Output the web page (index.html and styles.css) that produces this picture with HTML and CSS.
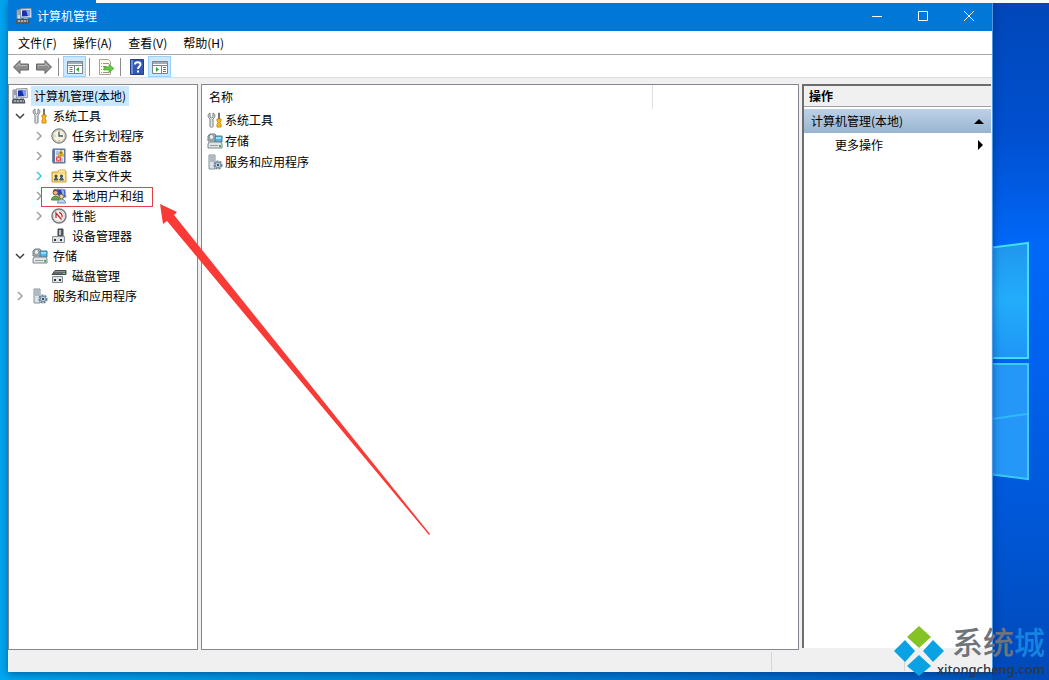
FILE: index.html
```html
<!DOCTYPE html>
<html lang="zh-CN">
<head>
    <meta charset="UTF-8">
    <title>计算机管理</title>
    <link rel="stylesheet" href="styles.css">
</head>
<body>
    <!-- icon set, 16x16 each -->
    <svg class="sprite" aria-hidden="true">
        <symbol id="computer" viewBox="0 0 16 16">
            <path d="M1 2h4v9H1z" fill="#d5d9dd" stroke="#7d858c"/>
            <path d="M2 4h2M2 6h2" stroke="#60686f"/>
            <path d="M4 1l11-.5.5 9L5 10z" fill="#e4e8ec" stroke="#8b949c"/>
            <path d="M6 2.500l8-.5v6L6 8.500z" fill="#1c2fb4"/>
            <path d="M10 2.200l4-.2v6l-2 .2z" fill="#7ba4f0"/>
            <path d="M8 10h4v2H8z" fill="#a5acb2"/>
            <path d="M1 11.500h11l1 3.500H0z" fill="#68717a" stroke="#484f56"/>
            <path d="M2 13h10" stroke="#dce0e3" stroke-dasharray="2 1"/>
        </symbol>
        <symbol id="tools" viewBox="0 0 16 16">
            <path d="M3 1v4l1.500 1L6 5V1c2.500 1 2.500 4 0 6v7.500c0 1-3 1-3 0V7C.5 5 .5 2 3 1z" fill="#e3e5e7" stroke="#777c80"/>
            <path d="M11.500 1h1v6h-1z" fill="#8e8e8e" stroke="#777"/>
            <path d="M10 7h4v2l-1 1v1l1 1v3h-4v-3l1-1v-1l-1-1z" fill="#fbbc20" stroke="#d28a0b"/>
        </symbol>
        <symbol id="clock" viewBox="0 0 16 16">
            <circle cx="8" cy="8" r="7.200" fill="#b8bbbd" stroke="#74787b"/>
            <circle cx="8" cy="8" r="5.700" fill="#f9f5dc" stroke="#d9d3b5"/>
            <path d="M8 3.500V8h4" fill="none" stroke="#3e5872" stroke-width="1.300"/>
            <path d="M8 12v1M3.500 8h1" stroke="#888"/>
        </symbol>
        <symbol id="events" viewBox="0 0 16 16">
            <path d="M2 1h12v14H2z" fill="#7c8fbf" stroke="#56688f"/>
            <path d="M4 2h9v12H4z" fill="#e6ebf5"/>
            <path d="M1 3h3M1 5h3M1 7h3M1 9h3M1 11h3M1 13h3" stroke="#4a5f8e"/>
            <path d="M5 4h3M5 6h3M9 11h3M9 13h3" stroke="#7f93bd"/>
            <path d="M10 2l3 6H7z" fill="#ffda2d" stroke="#c6a01b"/>
            <path d="M10 4v2M10 6.500v1" stroke="#333"/>
            <path d="M5 8.500h5v5H5z" fill="#df4545"/>
            <path d="M6 9.500l3 3m0-3l-3 3" stroke="#fff"/>
        </symbol>
        <symbol id="shared" viewBox="0 0 16 16">
            <path d="M1 4h6l1-2h6l1 2v10H1z" fill="#f7d878" stroke="#c99e37"/>
            <path d="M8 3h6" stroke="#fff4c6"/>
            <path d="M2 6h12v7H2z" fill="#ffe9a0"/>
            <circle cx="5" cy="8" r="1.600" fill="#5b4a2f"/>
            <circle cx="10.500" cy="8" r="1.600" fill="#395875"/>
            <path d="M3 12l2-3 2 3zm5.500 0l2-3 2 3z" fill="#477290" stroke="#355469"/>
        </symbol>
        <symbol id="users" viewBox="0 0 16 16">
            <path d="M6 1l8 .5 1 8L7 8z" fill="#283ebd" stroke="#9aa7b4"/>
            <path d="M10 2l3 .3.600 5-2-.3z" fill="#8eb2f2"/>
            <circle cx="4.500" cy="4.500" r="2.500" fill="#e9b77e" stroke="#7b562c"/>
            <path d="M2 4c0-4 5-4 5 0L4.500 3z" fill="#73502c"/>
            <path d="M0.500 12c0-5 8-5 8 0z" fill="#6ba644" stroke="#4c7e2d"/>
            <circle cx="10.500" cy="8.500" r="2.300" fill="#e6ce98" stroke="#88673c"/>
            <path d="M6.500 15c0-5 8-5 8 0z" fill="#bed5ef" stroke="#6c8fb5"/>
        </symbol>
        <symbol id="performance" viewBox="0 0 16 16">
            <circle cx="8" cy="8" r="7" fill="#fff" stroke="#777b7e" stroke-width="1.500"/>
            <circle cx="8" cy="8" r="5.400" fill="#fff" stroke="#c9cccd"/>
            <path d="M5 10V5l5.500 6.500M8 4.500c2 0 3.500 2 3 5" fill="none" stroke="#cc2525" stroke-width="1.300"/>
        </symbol>
        <symbol id="device" viewBox="0 0 16 16">
            <path d="M7 1h5v9H7z" fill="#565d62" stroke="#3e4448"/>
            <path d="M8 2h2v5H8z" fill="#b8c0c4"/>
            <path d="M1.500 8.500h12v6h-12z" fill="#e0e3e5" stroke="#8c9296"/>
            <path d="M4 11v2m6-2v2" stroke="#333" stroke-width="2"/>
        </symbol>
        <symbol id="storage" viewBox="0 0 16 16">
            <path d="M1 3l2-2h5l1 2v5H1z" fill="#b5bcc0" stroke="#777f84"/>
            <circle cx="4.500" cy="4" r="2.500" fill="#e8ecee" stroke="#818a90"/>
            <path d="M8 3h7v6H8z" fill="#4cb5e2" stroke="#477f9a"/>
            <path d="M9 4h5v2H9z" fill="#94def6"/>
            <path d="M2 9h12l1 2v4H1v-4z" fill="#e2e5e7" stroke="#7c8589"/>
            <path d="M3 12.500h8" stroke="#979fa3"/>
            <path d="M12 12h2v2h-2z" fill="#43b543"/>
        </symbol>
        <symbol id="disk" viewBox="0 0 16 16">
            <path d="M4 2.500h11v4H1z" fill="#62696d" stroke="#474d50"/>
            <path d="M4 3.500h10" stroke="#8d9598"/>
            <path d="M12 5h2v1h-2z" fill="#74d575"/>
            <path d="M1.500 8.500h10v6h-10z" fill="#e1e4e6" stroke="#858b8f"/>
            <path d="M4 11v2m5-2v2" stroke="#333" stroke-width="2"/>
        </symbol>
        <symbol id="services" viewBox="0 0 16 16">
            <path d="M2 1h6v14H2z" fill="#dce2e6" stroke="#84929b"/>
            <path d="M3 3h4M3 5h4M3 7h4" stroke="#8293a0"/>
            <circle cx="11" cy="11" r="3.600" fill="#b7c9d7" stroke="#6d8599" stroke-width="2" stroke-dasharray="2 1"/>
            <circle cx="11" cy="11" r="2.800" fill="#cbd8e1" stroke="#7890a4"/>
            <circle cx="11" cy="11" r="1.200" fill="#38536b"/>
        </symbol>
        <symbol id="arrow" viewBox="0 0 16 16">
            <path d="M0.500 8L7 1.500V5h8.500v6H7v3.500z" fill="#8d8d8d" stroke="#656565"/>
            <path d="M3 8l3.500-3.500V6.500H14" fill="none" stroke="#b9b9b9"/>
        </symbol>
        <symbol id="pane-left" viewBox="0 0 16 16">
            <path d="M.5 2.500h15v12H.5z" fill="#fff" stroke="#7b838b"/>
            <path d="M1 3h14v2H1z" fill="#a1acb7"/>
            <path d="M1 6.500h14M7.500 7v7" stroke="#7b838b"/>
            <path d="M2.500 8.500h3m-3 2h3m-3 2h3" stroke="#687681"/>
            <path d="M12 8v5l-3-2.500z" fill="#31a431"/>
        </symbol>
        <symbol id="pane-right" viewBox="0 0 16 16">
            <path d="M.5 2.500h15v12H.5z" fill="#fff" stroke="#7b838b"/>
            <path d="M1 3h14v2H1z" fill="#a1acb7"/>
            <path d="M1 6.500h14M9.500 7v7" stroke="#7b838b"/>
            <path d="M11 8.500h3m-3 2h3m-3 2h3" stroke="#687681"/>
            <path d="M4 8v5l3-2.500z" fill="#31a431"/>
        </symbol>
        <symbol id="export" viewBox="0 0 16 16">
            <path d="M1.500.5h9l2 2v13h-11z" fill="#fffdf0" stroke="#a8a38f"/>
            <path d="M3 4.500h1m1 0h6M3 7.500h1m1 0h4M3 10.500h1m1 0h4M3 13.500h1m1 0h6" stroke="#99958a"/>
            <path d="M6 8h5V5.500l5 4-5 4V11H6z" fill="#5fcc45" stroke="#389e29" stroke-width=".6"/>
        </symbol>
        <symbol id="help" viewBox="0 0 16 16">
            <path d="M1.500.5h13v15h-13z" fill="#3457b5" stroke="#233e8a"/>
            <path d="M2 1h2v14H2z" fill="#6d8bd6"/>
            <path d="M6 5.500c0-3 5.500-3 5.500 0 0 2-2.500 2-2.500 4.500M9 11.500v2" fill="none" stroke="#fff" stroke-width="2"/>
        </symbol>
        <symbol id="chevron" viewBox="0 0 16 16">
            <path d="M6 4l4 4-4 4" fill="none" stroke="currentColor" stroke-width="1.500"/>
        </symbol>
    </svg>

    <div class="desktop">
        <svg class="wallpaper-logo" viewBox="0 0 38 240" aria-hidden="true">
            <defs>
                <linearGradient id="glass" x1="0" y1="0" x2="0" y2="1">
                    <stop offset="0" stop-color="#2096ee"/>
                    <stop offset=".5" stop-color="#22adfb"/>
                    <stop offset="1" stop-color="#1e96f6"/>
                </linearGradient>
            </defs>
            <path d="M-4 7l40-5v115H-4z" fill="url(#glass)" stroke="#3fe0fa" stroke-width="2"/>
            <path d="M-4 123h40v115l-40-5z" fill="#2598f7" stroke="#38cdf8" stroke-width="2"/>
            <path d="M0 178l35-5" stroke="#30b9fb" stroke-width="2"/>
        </svg>

        <div class="window">
            <header class="titlebar">
                <svg class="icon"><use href="#computer"/></svg>
                <span class="title">计算机管理</span>
                <button class="caption" aria-label="最小化"><svg viewBox="0 0 12 12"><path d="M1 6.500h10"/></svg></button>
                <button class="caption" aria-label="最大化"><svg viewBox="0 0 12 12"><path d="M1.500 1.500h9v9h-9z"/></svg></button>
                <button class="caption" aria-label="关闭"><svg viewBox="0 0 12 12"><path d="M1 1l10 10M11 1L1 11"/></svg></button>
            </header>

            <nav class="menubar">
                <button>文件(F)</button>
                <button>操作(A)</button>
                <button>查看(V)</button>
                <button>帮助(H)</button>
            </nav>

            <div class="toolbar">
                <button aria-label="后退"><svg class="icon"><use href="#arrow"/></svg></button>
                <button aria-label="前进"><svg class="icon flip"><use href="#arrow"/></svg></button>
                <span class="sep"></span>
                <button class="on" aria-label="显示/隐藏控制台树"><svg class="icon"><use href="#pane-left"/></svg></button>
                <span class="sep"></span>
                <button aria-label="导出列表"><svg class="icon"><use href="#export"/></svg></button>
                <span class="sep"></span>
                <button aria-label="帮助"><svg class="icon"><use href="#help"/></svg></button>
                <button class="on" aria-label="显示/隐藏操作窗格"><svg class="icon"><use href="#pane-right"/></svg></button>
            </div>

            <main class="panes">
                <section class="tree">
                    <div class="node root">
                        <svg class="icon"><use href="#computer"/></svg>
                        <span class="selected">计算机管理(本地)</span>
                    </div>
                    <ul>
                        <li>
                            <div class="node">
                                <button class="toggle open" aria-label="折叠"><svg class="icon"><use href="#chevron"/></svg></button>
                                <svg class="icon"><use href="#tools"/></svg><span>系统工具</span>
                            </div>
                            <ul class="children">
                                <li class="node">
                                    <button class="toggle" aria-label="展开"><svg class="icon"><use href="#chevron"/></svg></button>
                                    <svg class="icon"><use href="#clock"/></svg><span>任务计划程序</span>
                                </li>
                                <li class="node">
                                    <button class="toggle" aria-label="展开"><svg class="icon"><use href="#chevron"/></svg></button>
                                    <svg class="icon"><use href="#events"/></svg><span>事件查看器</span>
                                </li>
                                <li class="node">
                                    <button class="toggle hot" aria-label="展开"><svg class="icon"><use href="#chevron"/></svg></button>
                                    <svg class="icon"><use href="#shared"/></svg><span>共享文件夹</span>
                                </li>
                                <li class="node marked">
                                    <button class="toggle" aria-label="展开"><svg class="icon"><use href="#chevron"/></svg></button>
                                    <svg class="icon"><use href="#users"/></svg><span>本地用户和组</span>
                                </li>
                                <li class="node">
                                    <button class="toggle" aria-label="展开"><svg class="icon"><use href="#chevron"/></svg></button>
                                    <svg class="icon"><use href="#performance"/></svg><span>性能</span>
                                </li>
                                <li class="node leaf">
                                    <svg class="icon"><use href="#device"/></svg><span>设备管理器</span>
                                </li>
                            </ul>
                        </li>
                        <li>
                            <div class="node">
                                <button class="toggle open" aria-label="折叠"><svg class="icon"><use href="#chevron"/></svg></button>
                                <svg class="icon"><use href="#storage"/></svg><span>存储</span>
                            </div>
                            <ul class="children">
                                <li class="node leaf">
                                    <svg class="icon"><use href="#disk"/></svg><span>磁盘管理</span>
                                </li>
                            </ul>
                        </li>
                        <li class="node">
                            <button class="toggle" aria-label="展开"><svg class="icon"><use href="#chevron"/></svg></button>
                            <svg class="icon"><use href="#services"/></svg><span>服务和应用程序</span>
                        </li>
                    </ul>
                </section>

                <section class="list">
                    <table>
                        <thead>
                            <tr><th>名称</th></tr>
                        </thead>
                        <tbody>
                            <tr><td><div class="item"><svg class="icon"><use href="#tools"/></svg>系统工具</div></td></tr>
                            <tr><td><div class="item"><svg class="icon"><use href="#storage"/></svg>存储</div></td></tr>
                            <tr><td><div class="item"><svg class="icon"><use href="#services"/></svg>服务和应用程序</div></td></tr>
                        </tbody>
                    </table>
                </section>

                <aside class="actions">
                    <h2>操作</h2>
                    <button class="group">计算机管理(本地)<span class="up"></span></button>
                    <button class="more">更多操作<span class="right"></span></button>
                </aside>
            </main>

            <footer class="statusbar">
                <span></span>
                <span></span>
                <span></span>
            </footer>
        </div>

        <div class="back-window"></div>

        <svg class="pointer" viewBox="0 0 272 332" aria-hidden="true">
            <path d="M0 0l17 8-3 3 256 319-1 1L7 17l-4 3z" fill="#f93a36"/>
        </svg>

        <div class="watermark">
            <svg viewBox="0 0 50 50" aria-hidden="true">
                <path d="M25 0l12 11-12 11-12-11z" fill="#84c225"/>
                <path d="M11 14l10 11-10 11L0 25z" fill="#0aa2e2"/>
                <path d="M39 14l11 11-11 11-10-11z" fill="#0aa2e2"/>
                <path d="M25 29l12 11-12 10-12-10z" fill="#0aa2e2"/>
            </svg>
            <div class="brand">
                <div class="name">系统<span>城</span></div>
                <div class="site">xitongcheng.com</div>
            </div>
        </div>
    </div>
</body>
</html>
```

FILE: styles.css
```css
*,
*::after {
    box-sizing: border-box;
}

body {
    margin: 0;
    font-family: "Noto Sans CJK SC", sans-serif;
    font-size: 12px;
    line-height: 20px;
    color: #000;
}

button {
    margin: 0;
    padding: 0;
    border: 0;
    background: none;
    font: inherit;
    color: inherit;
}

ul {
    margin: 0;
    padding: 0;
    list-style: none;
}

.sprite {
    position: absolute;
    width: 0;
    height: 0;
}

.icon {
    width: 16px;
    height: 16px;
    flex: none;
    display: block;
}

.flip {
    transform: scaleX(-1);
}

/* desktop */
.desktop {
    position: relative;
    display: flex;
    min-height: 100vh;
    padding: 0 56px 8px 8px;
    overflow: hidden;
    background:
        linear-gradient(#0047b8 0%, #0050d0 20%, #0068f8 36%, #0062ee 54%, #0058d8 75%, #0049b8 100%) right / 57px 100% no-repeat,
        linear-gradient(90deg, #00a8f0 0%, #0098e0 20%, #0078d0 60%, #0052c0 100%);
}

.wallpaper-logo {
    position: absolute;
    right: 19px;
    top: 241px;
    width: 38px;
    height: 240px;
}

.back-window {
    position: absolute;
    top: 0;
    left: 96px;
    right: 0;
    height: 3px;
    background: #f4fafe;
}

/* window */
.window {
    position: relative;
    flex: 1;
    display: flex;
    flex-direction: column;
    background: #f0f0f0;
    border-right: 1px solid #4d9be6;
    box-shadow: 0 2px 8px rgba(0, 30, 90, 0.5);
}

.titlebar {
    display: flex;
    align-items: center;
    height: 31px;
    padding-left: 8px;
    background: #0078d7;
    color: #fff;
}

.title {
    flex: 1;
    padding-left: 5px;
}

.caption {
    width: 46px;
    height: 31px;
    display: flex;
    align-items: center;
    justify-content: center;
}

.caption svg {
    width: 12px;
    height: 12px;
    fill: none;
    stroke: #fff;
}

.menubar {
    display: flex;
    gap: 16px;
    height: 24px;
    padding-left: 10px;
    background: #fff;
    border-bottom: 1px solid #a8a8a8;
}

.toolbar {
    display: flex;
    align-items: flex-end;
    height: 23px;
    padding-left: 1px;
    background: #fff;
    border-bottom: 1px solid #dcdcdc;
}

.toolbar button {
    display: flex;
    align-items: center;
    justify-content: center;
    width: 23px;
    height: 21px;
}

.toolbar .on {
    background: #cce8ff;
    border: 1px solid #99d1ff;
}

.sep {
    width: 1px;
    height: 18px;
    margin: 0 4px 1px 3px;
    background: #8c8c8c;
}

.panes {
    flex: 1;
    display: flex;
    gap: 3px;
    padding: 6px 1px 0 0;
}

.tree,
.list {
    background: #fff;
    border: 1px solid #828790;
}

/* console tree */
.tree {
    width: 190px;
    padding: 1px 0 0 3px;
}

.node {
    position: relative;
    display: flex;
    align-items: center;
    gap: 4px;
    height: 20px;
}

.node span {
    padding-left: 1px;
}

.root {
    gap: 3px;
}

.node .selected {
    padding: 0 3px;
    background: #cce8ff;
}

.children {
    padding-left: 19px;
}

.leaf {
    padding-left: 20px;
}

.toggle {
    color: #a0a0a0;
}

.toggle.open {
    color: #404040;
    transform: rotate(90deg);
}

.toggle.hot {
    color: #3bc4e8;
}

.marked::after {
    content: "";
    position: absolute;
    left: 10px;
    top: 1px;
    width: 112px;
    height: 20px;
    border: 1px solid #e0424a;
}

/* result list */
.list {
    flex: 1;
}

.list table {
    width: 451px;
    border-collapse: collapse;
}

.list th {
    height: 24px;
    padding: 0 0 0 7px;
    text-align: left;
    font-weight: normal;
    border-right: 1px solid #e0e0e0;
}

.list td {
    height: 21px;
    padding: 0 0 0 5px;
}

.item {
    display: flex;
    align-items: center;
    gap: 2px;
}

/* actions pane */
.actions {
    width: 189px;
    margin-bottom: 2px;
    background: #fff;
    border-top: 2px solid #6d6d6d;
    border-left: 2px solid #6d6d6d;
}

.actions h2 {
    margin: 0 0 2px;
    padding-left: 5px;
    font-size: 12px;
    line-height: 20px;
    background: #f0f0f0;
    border-bottom: 1px solid #a0a0a0;
}

.group,
.more {
    display: flex;
    align-items: center;
    justify-content: space-between;
    width: 100%;
    height: 24px;
}

.group {
    padding: 0 7px;
    background: linear-gradient(#bdd1e6, #99b4d1);
}

.more {
    padding: 0 8px 0 31px;
}

.up {
    border: 5px solid transparent;
    border-top: 0;
    border-bottom-color: #000;
}

.right {
    border: 5px solid transparent;
    border-right: 0;
    border-left-color: #000;
}

.statusbar {
    display: flex;
    height: 22px;
    padding: 2px 0 1px;
}

.statusbar span {
    width: 133px;
    border-right: 1px solid #d4d4d4;
}

.statusbar span:first-child {
    flex: 1;
}

.statusbar span:last-child {
    width: 87px;
    border: 0;
}

/* annotation and site mark */
.pointer {
    position: absolute;
    left: 160px;
    top: 204px;
    width: 272px;
    height: 332px;
}

.watermark {
    position: absolute;
    right: 4px;
    bottom: 2px;
    display: flex;
    align-items: flex-end;
}

.watermark svg {
    width: 50px;
    height: 50px;
    margin-bottom: 2px;
}

.brand {
    display: flex;
    flex-direction: column;
    align-items: flex-end;
    margin-left: -7px;
}

.name {
    font-family: "Liberation Sans", "Noto Sans CJK SC", sans-serif;
    font-size: 31px;
    line-height: 32px;
    color: #6f747a;
    font-weight: 500;
}

.name span {
    color: #1683e2;
}

.site {
    font-family: "Noto Sans", sans-serif;
    font-size: 13px;
    line-height: 18px;
    font-weight: 500;
    color: #2c3644;
}
```
